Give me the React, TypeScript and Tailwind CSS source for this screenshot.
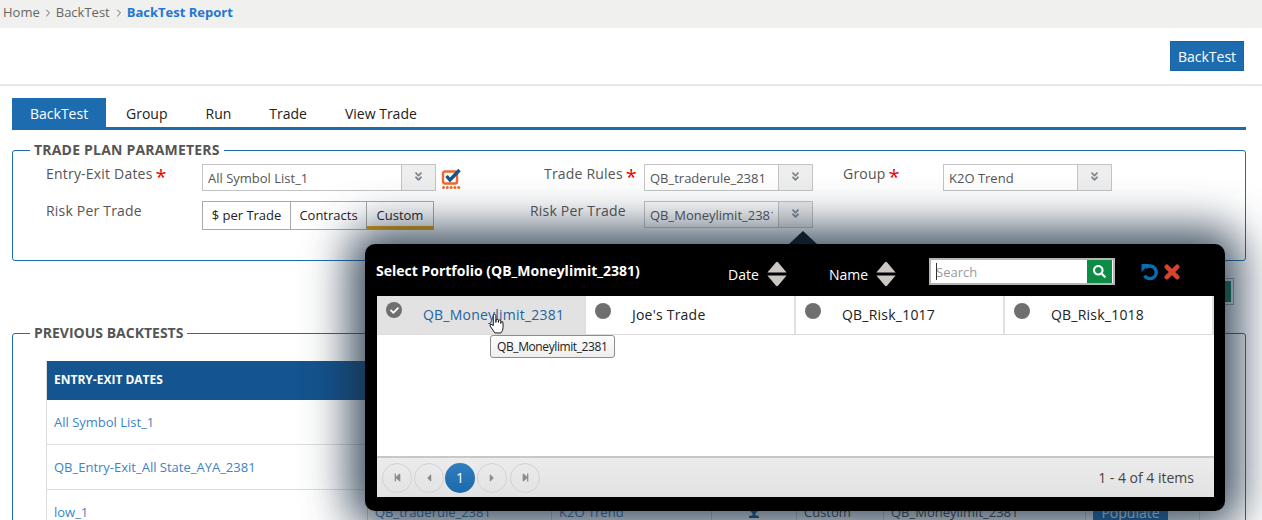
import { ChevronRight } from 'lucide-react';
import {
  FaAngleDoubleDown,
  FaCheck,
  FaSearch,
  FaStepBackward,
  FaStepForward,
  FaCaretLeft,
  FaCaretRight,
  FaTrophy,
} from 'react-icons/fa';

const TABS = ['Group', 'Run', 'Trade', 'View Trade'];

function Star() {
  return <span className="text-[#f00000] text-[20px] leading-none ml-[3px] align-[-5px]">*</span>;
}

function SelectBox({ value, width }: { value: string; width: string }) {
  return (
    <div className={`${width} h-[27px] flex border border-[#c4c4c4] bg-white shrink-0`}>
      <div className="flex-1 min-w-0 overflow-hidden whitespace-nowrap mx-[5px] text-[13px] leading-[26px] text-[#555]">
        {value}
      </div>
      <div className="w-[34px] shrink-0 bg-[#eeeeee] border-l border-[#c4c4c4] flex items-center justify-center">
        <FaAngleDoubleDown className="text-[#7a8590] text-[11px] -mt-[2px]" />
      </div>
    </div>
  );
}

function SortArrows() {
  return (
    <svg width="20" height="26" viewBox="0 0 20 26" className="shrink-0">
      <path d="M9 1.2 Q10 .4 11 1.2 L19.6 11.5 H.4 Z M.4 14.5 H19.6 L11 24.8 Q10 25.6 9 24.8 Z" fill="#cbc8c3" />
    </svg>
  );
}

function ScheduleIcon() {
  return (
    <svg width="21" height="23" viewBox="0 0 21 23" className="shrink-0">
      <rect x="2" y="4.5" width="14" height="12" rx="2" fill="none" stroke="#ee6a2c" strokeWidth="2.4" />
      <path d="M5.5 9 9 13 18.5 3" fill="none" stroke="#14548f" strokeWidth="3.4" />
      <g fill="#ee6a2c">
        <circle cx="2.5" cy="20.5" r="1.5" />
        <circle cx="6.3" cy="20.5" r="1.5" />
        <circle cx="10.1" cy="20.5" r="1.5" />
        <circle cx="13.9" cy="20.5" r="1.5" />
        <circle cx="17.7" cy="20.5" r="1.5" />
      </g>
    </svg>
  );
}

function UndoIcon() {
  return (
    <svg width="18" height="18" viewBox="0 0 18 18" className="shrink-0">
      <path d="M4.6 4.8 A6.3 6.3 0 1 1 3.6 12.6" fill="none" stroke="#0a6db3" strokeWidth="3.4" />
      <polygon points="0.5,1 8.5,1 0.5,9" fill="#0a6db3" />
    </svg>
  );
}

function CloseIcon() {
  return (
    <svg width="16" height="16" viewBox="0 0 16 16" className="shrink-0">
      <path d="M2.8 2.8 13.2 13.2 M13.2 2.8 2.8 13.2" stroke="#d8432e" strokeWidth="4.6" strokeLinecap="round" />
    </svg>
  );
}

function HandCursor() {
  return (
    <svg width="15" height="20" viewBox="0 0 14 19" className="absolute left-[112px] top-[18px]">
      <path
        d="M4 1.6 a1.2 1.2 0 0 1 2.4 0 V8 l.2-2 a1.1 1.1 0 0 1 2.2 0 V8 l.1-1.3 a1.1 1.1 0 0 1 2.2 0 V9 l.1-.8 a1 1 0 0 1 2 0 V13 q0 3-2 5 H5.5 L1 11.5 q-.8-1.5.8-1.8 L4 11 Z"
        fill="#fff"
        stroke="#111"
        strokeWidth="0.9"
      />
    </svg>
  );
}

function PortfolioCell({ name, selected }: { name: string; selected?: boolean }) {
  return (
    <div
      className={`flex h-[38px] border-r-2 border-[#e0e0e0] ${selected ? 'bg-[#e2e2e2] pl-[9px]' : 'bg-white pl-[9px]'}`}
    >
      <div
        className={`${selected ? 'mt-[6px]' : 'mt-[7px]'} size-4 rounded-full bg-[#6f6f6f] flex items-center justify-center shrink-0`}
      >
        {selected && <FaCheck className="text-white text-[9px]" />}
      </div>
      <div
        className={`${selected ? 'ml-[21px] text-[#24639e]' : 'ml-[21px] text-[#222]'} text-[14px] leading-[37px] whitespace-nowrap tracking-[0.22px]`}
      >
        {name}
      </div>
    </div>
  );
}

function PageButton({ children, active }: { children: React.ReactNode; active?: boolean }) {
  return (
    <div
      className={`size-[30px] rounded-full flex items-center justify-center text-[12px] ${
        active
          ? '-ml-px bg-gradient-to-b from-[#2f7fc0] to-[#1c68aa] text-white'
          : 'border border-[#d2d2d2] text-[#8f8a87] last:ml-px'
      }`}
    >
      {children}
    </div>
  );
}

function PortfolioPopup() {
  return (
    <div className="absolute left-[365px] top-[244px] w-[860px] h-[267px] bg-black rounded-[10px] shadow-[0_0_45px_15px_rgba(25,45,65,0.85)]">
      {/* arrow */}
      <div className="absolute left-[424px] -top-[13px] w-0 h-0 border-x-[14px] border-x-transparent border-b-[13px] border-b-[#0d1d2c]" />

      <div className="h-[52px] flex items-start pl-[11px] text-white">
        <div className="w-[352px] pt-[18px] text-[14px] leading-[18px] font-bold whitespace-nowrap">
          Select Portfolio (QB_Moneylimit_2381)
        </div>
        <div className="flex items-center gap-[8px] pt-[16px] w-[101px]">
          <span className="text-[14px] leading-[26px] mt-[2px]">Date</span>
          <SortArrows />
        </div>
        <div className="flex items-center gap-[8px] pt-[16px] w-[100px]">
          <span className="text-[14px] leading-[26px] mt-[2px]">Name</span>
          <SortArrows />
        </div>
        <div className="mt-[14px] w-[186px] h-[27px] border-2 border-[#b5b5b5] bg-white flex">
          <div className="flex-1 pl-[5px] text-[13px] leading-[24px] text-[#9a9a9a] relative">
            <span className="absolute left-[5px] top-[3px] h-[17px] w-px bg-[#333]" />
            Search
          </div>
          <div className="w-[25px] mr-[1px] bg-[#0c8c45] flex items-center justify-center">
            <FaSearch className="text-white text-[13px]" />
          </div>
        </div>
        <div className="flex items-center gap-[5px] mt-[19px] ml-[26px]">
          <UndoIcon />
          <CloseIcon />
        </div>
      </div>

      <div className="relative mx-[12px] w-[837px] h-[201px] bg-white flex flex-col">
        <div className="grid grid-cols-[209px_210px_209px_209px] h-[39px] border-b border-[#dcdcdc]">
          <PortfolioCell name="QB_Moneylimit_2381" selected />
          <PortfolioCell name="Joe's Trade" />
          <PortfolioCell name="QB_Risk_1017" />
          <PortfolioCell name="QB_Risk_1018" />
        </div>
        <div className="flex-1" />
        <div className="h-[41px] border-t-2 border-[#c8c8c8] bg-gradient-to-b from-[#ececec] to-[#e2e2e2] flex items-center pl-[5px] pr-[20px]">
          <div className="flex items-center gap-[2px]">
            <PageButton>
              <FaStepBackward className="text-[9px]" />
            </PageButton>
            <PageButton>
              <FaCaretLeft />
            </PageButton>
            <PageButton active>
              <span className="text-[14px]">1</span>
            </PageButton>
            <PageButton>
              <FaCaretRight />
            </PageButton>
            <PageButton>
              <FaStepForward className="text-[9px]" />
            </PageButton>
          </div>
          <div className="ml-auto text-[14px] text-[#444]">1 - 4 of 4 items</div>
        </div>

        {/* hover tooltip and cursor */}
        <div className="absolute left-[113px] top-[39px] h-[23px] w-[125px] pl-[6px] border border-[#8d8d8d] rounded-[3px] bg-gradient-to-b from-white to-[#eeeeee] text-[12px] leading-[21px] text-[#222] whitespace-nowrap tracking-[-0.4px]">
          QB_Moneylimit_2381
        </div>
        <HandCursor />
      </div>
    </div>
  );
}

const ROWS = [
  { dates: 'All Symbol List_1' },
  { dates: 'QB_Entry-Exit_All State_AYA_2381' },
  {
    dates: 'low_1',
    rules: 'QB_traderule_2381',
    group: 'K2O Trend',
    risk: 'Custom',
    money: 'QB_Moneylimit_2381',
    full: true,
  },
];

export default function App() {
  return (
    <div
      className="relative h-[520px] w-[1262px] overflow-hidden bg-white"
      style={{ fontFamily: '"Open Sans", sans-serif' }}
    >
      {/* breadcrumb */}
      <div className="h-[28px] bg-[#f0f0ee] flex items-center pl-[3px] text-[13px] text-[#666] pb-[3px]">
        <span>Home</span>
        <ChevronRight className="size-3 mx-[2px] text-[#666]" />
        <span>BackTest</span>
        <ChevronRight className="size-3 ml-[3px] mr-[2px] text-[#666]" />
        <span className="font-bold text-[#2277d2]">BackTest Report</span>
      </div>

      {/* toolbar */}
      <div className="h-[58px] border-b-2 border-[#e8e8e8] flex items-start justify-end pt-[13px] pr-[18px]">
        <button className="h-[30px] w-[74px] bg-[#1e6cb0] border border-[#1a62a0] text-white text-[14px]">
          BackTest
        </button>
      </div>

      <div className="px-[12px] pr-[16px] pt-[12px]">
        {/* tabs */}
        <div className="flex h-[32px] border-b-[3px] border-[#1e6cb0] text-[14px] leading-[31px] text-[#222]">
          <div className="w-[94px] pl-[18px] bg-[#1e6cb0] text-white">BackTest</div>
          {TABS.map((tab, i) => (
            <div key={tab} className={i === 0 ? 'pl-[20px] pr-[19px]' : 'px-[19px]'}>
              {tab}
            </div>
          ))}
        </div>

        {/* trade plan parameters */}
        <fieldset className="mt-[10px] h-[121px] border border-[#1e6cb0] rounded-[3px] px-[33px]">
          <legend className="-ml-[16px] px-[4px] text-[14px] leading-[20px] font-bold text-[#555] tracking-[0.2px]">
            TRADE PLAN PARAMETERS
          </legend>
          <div className="flex mt-[4px] h-[27px]">
            <div className="w-[156px] text-[14px] leading-[20px] text-[#555] tracking-[0.2px]">
              Entry-Exit Dates
              <Star />
            </div>
            <SelectBox value="All Symbol List_1" width="w-[234px]" />
            <div className="w-[94px] pl-[5px] pt-[3px]">
              <ScheduleIcon />
            </div>
            <div className="w-[114px] pl-[14px] text-[14px] leading-[20px] text-[#555] tracking-[0.2px]">
              Trade Rules
              <Star />
            </div>
            <SelectBox value="QB_traderule_2381" width="w-[169px]" />
            <div className="w-[100px] ml-[30px] text-[14px] leading-[20px] text-[#555] tracking-[0.2px]">
              Group
              <Star />
            </div>
            <SelectBox value="K2O Trend" width="w-[169px]" />
          </div>
          <div className="flex mt-[10px]">
            <div className="w-[156px] text-[14px] leading-[20px] text-[#555] tracking-[0.2px]">Risk Per Trade</div>
            <div className="w-[328px] shrink-0">
              <div className="inline-flex h-[29px] border border-[#a9a9a9] text-[13px] text-[#222] leading-[26px]">
                <div className="w-[88px] text-center border-r border-[#a9a9a9]">$ per Trade</div>
                <div className="w-[76px] text-center border-r border-[#a9a9a9]">Contracts</div>
                <div className="w-[66px] text-center border-b-[3px] border-[#e39f0c]">Custom</div>
              </div>
            </div>
            <div className="w-[114px] text-[14px] leading-[20px] text-[#555] tracking-[0.2px]">Risk Per Trade</div>
            <SelectBox value="QB_Moneylimit_2381" width="w-[169px]" />
          </div>
        </fieldset>

        {/* action behind the popup */}
        <div className="mt-[17px] flex justify-end pr-[12px]">
          <div className="h-[27px] w-[60px] border border-[#a9a9a9] p-[2px]">
            <div className="size-full bg-[#167a4c]" />
          </div>
        </div>

        {/* previous backtests */}
        <fieldset className="mt-[18px] border border-[#1e6cb0] rounded-[3px] pl-[33px] pr-[45px] pb-[20px]">
          <legend className="-ml-[16px] px-[4px] text-[14px] leading-[20px] font-bold text-[#555]">
            PREVIOUS BACKTESTS
          </legend>
          <div className="mt-[18px] border-x border-[#dddddd] text-[13px]">
            <div className="h-[39px] bg-[#14548f] text-white font-bold text-[12px] leading-[38px] pl-[7px]">
              ENTRY-EXIT DATES
            </div>
            {ROWS.map((row) => (
              <div
                key={row.dates}
                className="grid grid-cols-[320px_184px_160px_85px_87px_202px_1fr] h-[45px] border-b border-[#dddddd] leading-[44px] text-[#3c84c8]"
              >
                <div className="pl-[7px] whitespace-nowrap">{row.dates}</div>
                {row.full && (
                  <>
                    <div className="pl-[7px] border-l border-[#d4d4d4] text-[#2f76b8]">{row.rules}</div>
                    <div className="pl-[7px] border-l border-[#d4d4d4] text-[#2f76b8]">{row.group}</div>
                    <div className="border-l border-[#d4d4d4] flex justify-center pt-[11px]">
                      <FaTrophy className="text-[#14548f] text-[18px]" />
                    </div>
                    <div className="pl-[7px] border-l border-[#d4d4d4] text-[#444]">{row.risk}</div>
                    <div className="pl-[7px] border-l border-[#d4d4d4] text-[#444]">{row.money}</div>
                    <div className="pl-[7px] pt-[11px] border-l border-[#d4d4d4]">
                      <div className="w-[75px] h-[24px] bg-[#1e6cb0] text-white text-center text-[14px] leading-[23px]">
                        Populate
                      </div>
                    </div>
                  </>
                )}
              </div>
            ))}
          </div>
        </fieldset>
      </div>

      <PortfolioPopup />
    </div>
  );
}
